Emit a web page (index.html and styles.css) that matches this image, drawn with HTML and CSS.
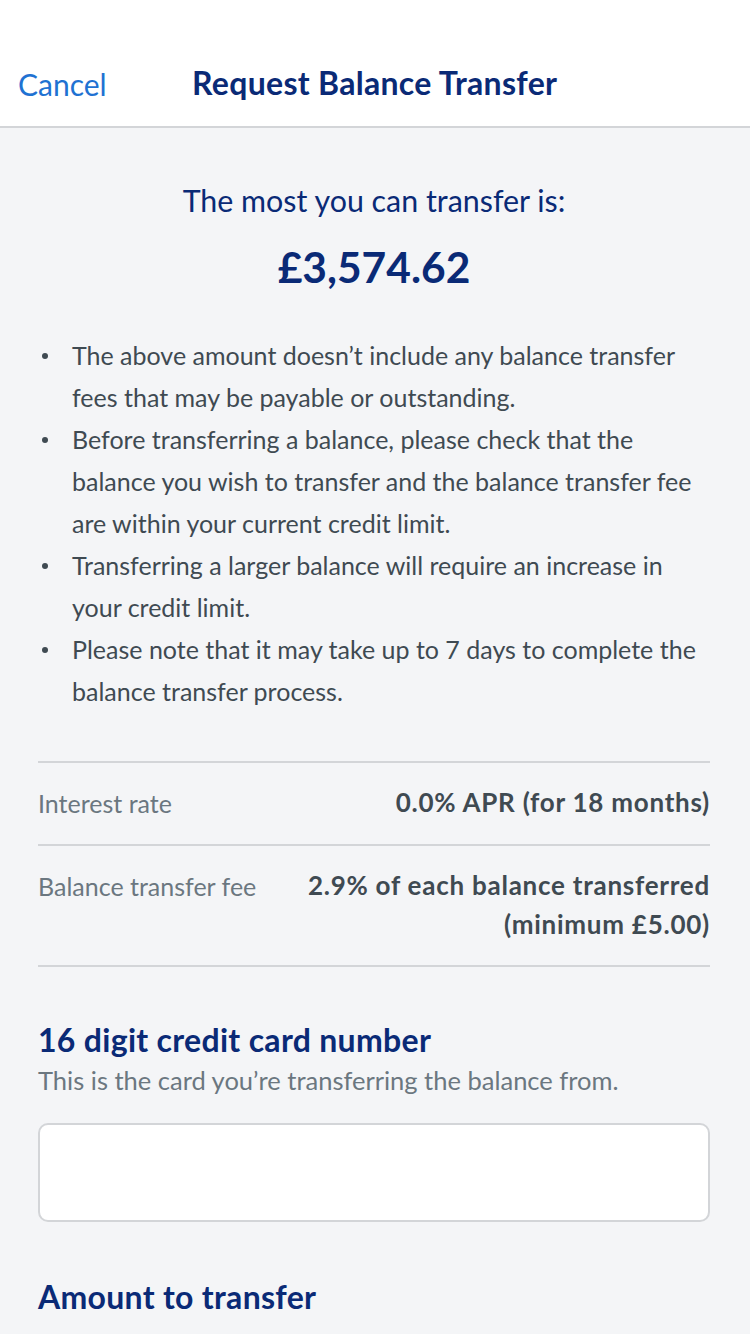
FILE: index.html
```html
<!DOCTYPE html>
<html>
<head>
<meta charset="utf-8">
<link rel="stylesheet" href="styles.css">
</head>
<body>
<div class="header">
  <span class="cancel">Cancel</span>
  <span class="title">Request Balance Transfer</span>
</div>
<div class="content">
  <div class="most">The most you can transfer is:</div>
  <div class="amount">£3,574.62</div>
  <ul class="bullets">
    <li>The above amount doesn’t include any balance transfer fees that may be payable or outstanding.</li>
    <li>Before transferring a balance, please check that the balance you wish to transfer and the balance transfer fee are within your current credit limit.</li>
    <li>Transferring a larger balance will require an increase in your credit limit.</li>
    <li>Please note that it may take up to 7 days to complete the balance transfer process.</li>
  </ul>
  <div class="rows">
    <div class="row">
      <div class="label">Interest rate</div>
      <div class="value">0.0% APR (for 18 months)</div>
    </div>
    <div class="row">
      <div class="label">Balance transfer fee</div>
      <div class="value">2.9% of each balance transferred<br>(minimum £5.00)</div>
    </div>
  </div>
  <div class="field">
    <div class="field-title">16 digit credit card number</div>
    <div class="field-hint">This is the card you’re transferring the balance from.</div>
    <div class="input"></div>
  </div>
  <div class="field">
    <div class="field-title">Amount to transfer</div>
  </div>
</div>
</body>
</html>
```
FILE: styles.css
```css
html, body {
  margin: 0;
  padding: 0;
  background: #f4f5f7;
  font-family: Lato, "Open Sans", sans-serif;
}
.header {
  height: 128px;
  box-sizing: border-box;
  background: #ffffff;
  border-bottom: 2px solid #d3d5d8;
  display: flex;
  align-items: flex-end;
  padding: 0 0 24px 18px;
}
.cancel {
  color: #1f72d2;
  font-size: 30px;
  width: 174px;
}
.title {
  color: #0a2a76;
  font-size: 32px;
  letter-spacing: 0.3px;
  font-weight: 700;
}
.content {
  padding: 0 40px 0 38px;
}
.most {
  text-align: center;
  color: #0a2a76;
  font-size: 30.4px;
  margin-top: 52px;
  line-height: 40px;
}
.amount {
  text-align: center;
  color: #0a2a76;
  font-size: 42.5px;
  font-weight: 700;
  margin-top: 22px;
  line-height: 50px;
}
.bullets {
  list-style: none;
  margin: 42px 0 0 0;
  padding: 0 0 0 34px;
  color: #3f4a52;
  font-size: 25px;
  line-height: 42px;
}
.bullets li {
  position: relative;
}
.bullets li::before {
  content: "";
  position: absolute;
  left: -30px;
  top: 19px;
  width: 6px;
  height: 6px;
  border-radius: 50%;
  background: #3f4a52;
}
.rows {
  margin-top: 49px;
  border-top: 2px solid #d3d5d8;
}
.row {
  display: flex;
  justify-content: space-between;
  align-items: flex-start;
  border-bottom: 2px solid #d3d5d8;
  padding: 20px 0 21px;
  font-size: 25px;
  line-height: 40px;
}
.label {
  color: #6b7780;
}
.value {
  color: #3f4a52;
  font-weight: 700;
  font-size: 26px;
  line-height: 39px;
  letter-spacing: 0.75px;
  text-align: right;
}
.field {
  margin-top: 53px;
}
.field-title {
  color: #0a2a76;
  font-size: 32px;
  letter-spacing: 0.3px;
  font-weight: 700;
  line-height: 40px;
}
.field-hint {
  color: #6b7780;
  font-size: 25.5px;
  line-height: 40px;
}
.input {
  margin-top: 23px;
  height: 95px;
  background: #ffffff;
  border: 2px solid #d3d5d8;
  border-radius: 10px;
}
.field + .field {
  margin-top: 55px;
}
```
